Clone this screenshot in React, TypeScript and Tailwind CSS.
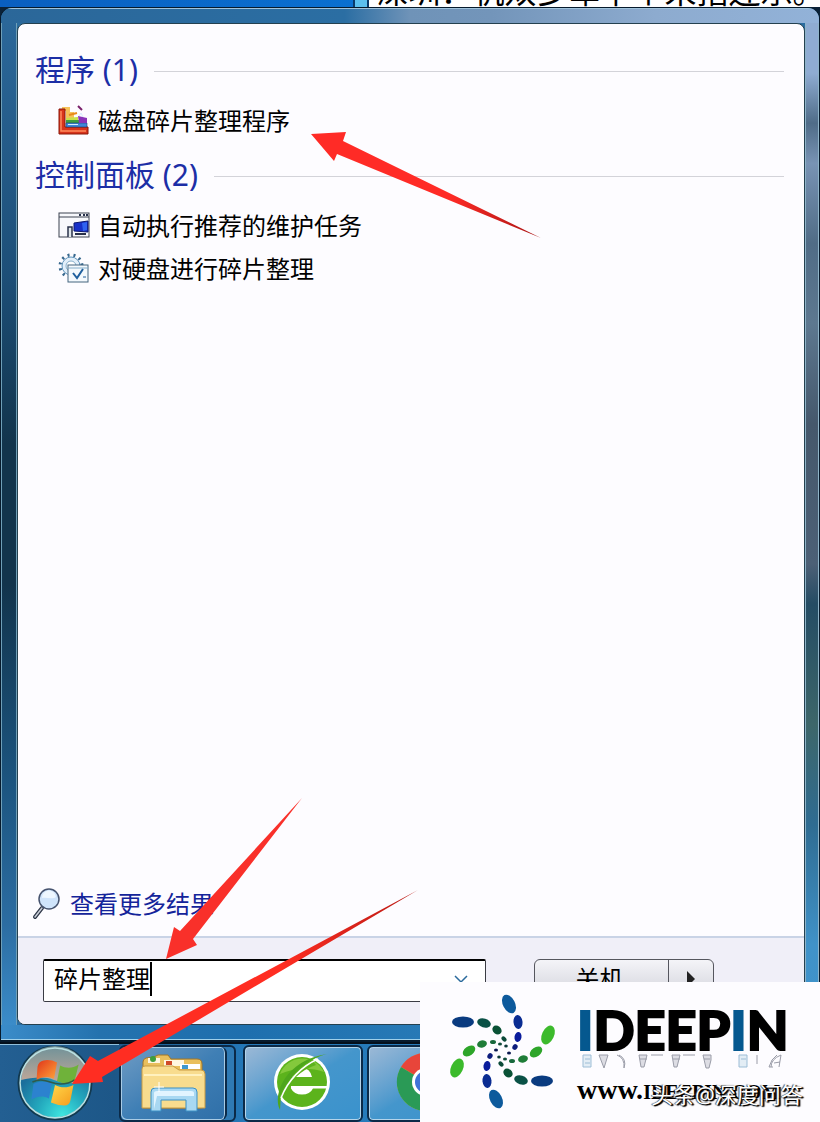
import React, { useState } from "react";

interface ResultItem {
  label: string;
  icon: React.ReactNode;
}

interface ResultGroupProps {
  title: string;
  items: ResultItem[];
}

const DefragIcon = () => (
  <svg viewBox="0 0 32 32" className="size-8 shrink-0" aria-hidden="true">
    <path d="M4 2h8v5h4v8H8V6H4z" fill="#f6c25a" />
    <path d="M20 1l4 4" stroke="#7a1f6a" strokeWidth="2" />
    <path d="M1 4h6v18h23v7H1z" fill="#d8341c" stroke="#8a1608" strokeWidth="1" />
    <path d="M3 6v20h25" stroke="#ff8a5c" strokeWidth="1.500" fill="none" />
    <path d="M8 13l12-1v3H8z" fill="#c8e04a" />
    <path d="M8 15h13v3H8z" fill="#3f9e42" />
    <path d="M8 18h21v4H8z" fill="#3f86d8" stroke="#1c3c78" strokeWidth=".6" />
    <path d="M20 11l9 2v5h-8z" fill="#8a34b8" />
    <path d="M21 11l2-3 2 4M10 19.500h10" stroke="#d6ecff" strokeWidth="1" fill="none" />
    <path d="M11 10l8-2" stroke="#e88a1c" strokeWidth="2" />
  </svg>
);

const MaintenanceIcon = () => (
  <svg viewBox="0 0 32 32" className="size-8 shrink-0" aria-hidden="true">
    <rect x="1" y="3" width="30" height="24" fill="#f7f8fc" stroke="#3c4250" />
    <path d="M1 7h30" stroke="#3c4250" />
    <path d="M21 5h2M25 5h2M28 5h2" stroke="#28304a" strokeWidth="2" />
    <path d="M16 13l14-2v11l-14-1z" fill="#1730c8" stroke="#0c1870" />
    <path d="M24 13l5-1v8l-4 1z" fill="#2f62f0" />
    <path d="M17 24h11" stroke="#28304a" strokeWidth="2" />
    <path d="M10 27V17h4v10" stroke="#28304a" strokeWidth="1.500" fill="#dfe6ea" />
  </svg>
);

const DefragTaskIcon = () => (
  <svg viewBox="0 0 32 32" className="size-8 shrink-0" aria-hidden="true">
    <circle cx="13" cy="13" r="11" fill="none" stroke="#38688e" strokeWidth="3" strokeDasharray="2 4" />
    <circle cx="13" cy="13" r="9" fill="#e2effa" stroke="#5f93bb" />
    <circle cx="13" cy="13" r="5" fill="#fff" stroke="#86aeca" />
    <rect x="10" y="12" width="20" height="17" fill="#f4f9fd" stroke="#44657f" />
    <path d="M10 15h20" stroke="#86aeca" />
    <path d="M15 20l4 5 6-9" fill="none" stroke="#1f5f9e" strokeWidth="2" />
    <path d="M25 24h3" stroke="#1f5f9e" />
  </svg>
);

const MagnifierIcon = () => (
  <svg viewBox="0 0 30 32" className="h-8 w-[30px] shrink-0" aria-hidden="true">
    <path d="M10 20L3 29" stroke="#2c3546" strokeWidth="4" strokeLinecap="round" />
    <path d="M10 20L3 29" stroke="#c8ccd6" strokeWidth="1.500" strokeLinecap="round" />
    <circle cx="17" cy="11" r="10" fill="#cfe4fb" stroke="#46536e" strokeWidth="1.500" />
    <path d="M10 10a7 7 0 0 1 14-1c-4 3-9 0-14 1z" fill="#eef7ff" />
  </svg>
);

const StartOrb = () => (
  <svg viewBox="0 0 74 74" className="size-[76px]" aria-hidden="true">
    <defs>
      <linearGradient id="orbTop" x1="0" y1="0" x2="0" y2="1">
        <stop offset="0" stopColor="#6f9299" />
        <stop offset="1" stopColor="#c3a898" />
      </linearGradient>
      <radialGradient id="orbBottom" cx=".6" cy=".95" r=".7">
        <stop offset="0" stopColor="#3fe6e0" />
        <stop offset=".5" stopColor="#23a8bd" />
        <stop offset="1" stopColor="#1b6f9c" />
      </radialGradient>
      <linearGradient id="flagRed" x1="0" y1="0" x2="1" y2="1">
        <stop offset="0" stopColor="#e0341a" />
        <stop offset="1" stopColor="#ffa83a" />
      </linearGradient>
      <linearGradient id="flagYellow" x1="0" y1="0" x2="1" y2="1">
        <stop offset="0" stopColor="#ffd84a" />
        <stop offset="1" stopColor="#f59a1c" />
      </linearGradient>
    </defs>
    <circle cx="37" cy="36" r="35" fill="url(#orbBottom)" stroke="#12394f" strokeWidth="3" />
    <path d="M4 33a33 33 0 0 1 66 0c-14 4-24 4-34 0S14 31 4 33z" fill="url(#orbTop)" />
    <circle cx="37" cy="36" r="34" fill="none" stroke="#b9e0e2" strokeWidth="1.500" />
    <path d="M20 20q1-5 6-6 7-1 13 2l-3 16c-6-3-12-2-17 1z" fill="url(#flagRed)" />
    <path d="M42 19c6 3 12 3 18-1l-4 16c-5 3-11 3-17 0z" fill="#6fb23a" />
    <path d="M16 37c6-3 12-3 18-1l-3 15c-6-3-11-2-17 1z" fill="#2c82cf" />
    <path d="M37 38c6 3 12 3 18 0l-3 15q-1 5-6 5-6 0-13-3z" fill="url(#flagYellow)" />
    <path d="M15 35c12-5 17 2 27 2 6 0 10-1 14-4" fill="none" stroke="#2f5a4a" strokeWidth="1.500" />
  </svg>
);

const FolderIcon = () => (
  <svg viewBox="0 0 66 60" className="h-[60px] w-[66px]" aria-hidden="true">
    <path d="M3 8q0-3 3-4l8-1 4-2h10l3 4h26q5 0 5 5v44H3z" fill="#e9bf5c" stroke="#a0762a" />
    <path d="M8 4h12v5H8z" fill="#fff6e0" />
    <circle cx="13" cy="5" r="3" fill="#3e9e3c" />
    <path d="M24 6h20v6H24z" fill="#fff6e0" />
    <path d="M26 7h6v4h-6z" fill="#d04a28" />
    <path d="M2 15q0-3 3-3h28l6 4h22q4 0 4 4v34H2z" fill="#f8dc8e" stroke="#c79a42" />
    <path d="M40 10h20v5H40z" fill="#fff" />
    <path d="M42 11h6v4h-6z" fill="#3f98d0" />
    <path d="M4 21h58" stroke="#fff1bf" strokeWidth="2" />
    <path d="M11 57V38q0-4 4-4h38q4 0 4 4v19H46V46H21v11z" fill="#a8d8f2" stroke="#3a8fc4" />
    <path d="M14 55V39q0-2 3-2h34q3 0 3 2v3H17z" fill="#e1f4ff" />
    <path d="M19 28v10M14 33h10" stroke="#fff" strokeWidth="1" />
  </svg>
);

const BrowserIcon = () => (
  <svg viewBox="0 0 60 60" className="size-[60px]" aria-hidden="true">
    <circle cx="30" cy="30" r="28" fill="#fff" />
    <circle cx="30" cy="30" r="25" fill="#5cb31c" />
    <path d="M8 22a24 24 0 0 1 44-2c-14-5-30-4-44 2z" fill="#84c93c" />
    <path d="M20 25q2-9 10-9t10 9zM19 34h38v2.500H41q-3 6-11 6t-11-6z" fill="#fff" />
    <path d="M8 58C0 42 14 8 55 2 36 6 16 26 9 42z" fill="#4ea61c" />
    <path d="M20 25q8-11 20-17l4 5q-12 4-20 12zM10 40q3-6 8-10v7q-4 3-7 8z" fill="#5cb31c" />
    <path d="M46 7C30 14 16 28 9 46" fill="none" stroke="#fff" strokeWidth="1.500" />
  </svg>
);

const ChromeIcon = () => (
  <svg viewBox="0 0 60 60" className="size-[60px]" aria-hidden="true">
    <circle cx="30" cy="30" r="29" fill="#f2c230" />
    <path d="M30 30L5 15a29 29 0 0 1 50 0z" fill="#e8453a" />
    <path d="M30 30L5 15a29 29 0 0 0 25 44z" fill="#2a9a56" />
    <circle cx="30" cy="30" r="14" fill="#fff" />
    <circle cx="30" cy="30" r="11" fill="#3f73d8" />
  </svg>
);

const PinwheelArms = () => (
  <>
    <ellipse cx="79" cy="24" rx="6" ry="10" transform="rotate(-27 79 24)" fill="#0d5a9c" />
    <ellipse cx="88" cy="42" rx="4.500" ry="7" transform="rotate(-6 88 42)" fill="#0a2c92" />
    <ellipse cx="88" cy="57" rx="3.500" ry="5" transform="rotate(8 88 57)" fill="#0a1c9c" />
    <ellipse cx="85" cy="67" rx="2.500" ry="3" transform="rotate(30 85 67)" fill="#0c1c7c" />
    <ellipse cx="79" cy="73" rx="2" ry="1.500" fill="#0b1a50" />
    <ellipse cx="33" cy="42" rx="11" ry="5.500" fill="#0a3b80" />
    <ellipse cx="54" cy="43" rx="7" ry="4.500" transform="rotate(17 54 43)" fill="#0a5146" />
    <ellipse cx="67" cy="50" rx="5" ry="4" transform="rotate(38 67 50)" fill="#0a5236" />
    <ellipse cx="74" cy="59" rx="3" ry="2" transform="rotate(45 74 59)" fill="#0b4a38" />
    <ellipse cx="76" cy="66" rx="1.800" ry="1.500" fill="#0b3a38" />
    <ellipse cx="118" cy="55" rx="6" ry="10" transform="rotate(25 118 55)" fill="#3cba2c" />
    <ellipse cx="106" cy="72" rx="7" ry="4.500" transform="rotate(-35 106 72)" fill="#2ea52a" />
    <ellipse cx="93" cy="79" rx="5" ry="3.500" transform="rotate(-15 93 79)" fill="#1f7d38" />
    <ellipse cx="82" cy="81" rx="3" ry="2" fill="#17683c" />
    <ellipse cx="75" cy="79" rx="2" ry="1.500" fill="#0e4a3a" />
  </>
);

const ResultGroup: React.FC<ResultGroupProps> = ({ title, items }) => {
  return (
    <section className="mb-[9px]">
      <h2 className="flex h-12 items-center gap-4 pr-5 pl-[17px] text-[30px] whitespace-nowrap text-[#1c2ea6]">
        <span className="pb-1">{title}</span>
        <span className="h-px flex-1 bg-[#d3d3d9]" />
      </h2>
      <ul className="pt-[5px] pl-10">
        {items.map((item) => (
          <li key={item.label}>
            <a href="#" className="flex h-[43px] items-center gap-2 pb-px text-2xl text-black">
              {item.icon}
              {item.label}
            </a>
          </li>
        ))}
      </ul>
    </section>
  );
};

const SearchMenu = () => {
  const [query, setQuery] = useState("碎片整理");

  return (
    <div className="flex flex-1 flex-col overflow-hidden rounded-t-xl border border-b-2 border-[#061a2c] bg-[#2a6c9f]">
      <div className="h-[15px] shrink-0 border-t border-[#9fc3dc] bg-[linear-gradient(90deg,#2b6799_0%,#2b6ea3_42%,#6f93b8_50%,#7395ba_60%,#8dabcf_80%,#92b2d8_100%)]" />
      <div className="flex flex-1">
        <div className="w-4 border-x border-[#6f9fb8] bg-[linear-gradient(180deg,#2b6799_0%,#1d4f78_25%,#12344c_42%,#12344c_56%,#1c5580_76%,#2c6da2_90%,#3b8cc9_100%)]" />
        <main className="flex flex-1 flex-col overflow-hidden rounded-lg border border-[#24404f] bg-[#fdfcff]">
          <div className="flex flex-1 flex-col pt-[23px]">
            <ResultGroup
              title="程序 (1)"
              items={[{ label: "磁盘碎片整理程序", icon: <DefragIcon /> }]}
            />
            <ResultGroup
              title="控制面板 (2)"
              items={[
                { label: "自动执行推荐的维护任务", icon: <MaintenanceIcon /> },
                { label: "对硬盘进行碎片整理", icon: <DefragTaskIcon /> },
              ]}
            />
            <a href="#" className="mt-auto mb-4 flex items-center gap-2 pl-[14px] text-2xl text-[#14249a]">
              <MagnifierIcon />
              查看更多结果
            </a>
          </div>
          <div className="flex h-[88px] items-start gap-12 border-t-2 border-[#c9d3e6] bg-[#f0eff8] pt-[21px] pr-[90px] pl-[25px]">
            <div className="flex h-[43px] flex-1 items-center rounded-xs border border-t-2 border-[#3a3c44] border-t-black bg-white pb-1 pl-[10px]">
              <input
                type="text"
                aria-label="搜索程序和文件"
                value={query}
                onChange={(e) => setQuery(e.target.value)}
                className="field-sizing-content h-[34px] border-r-2 border-black pb-1 text-2xl text-black outline-none"
              />
              <button type="button" aria-label="清除" className="mr-4 ml-auto" onClick={() => setQuery("")}>
                <svg viewBox="0 0 16 10" className="h-[10px] w-4">
                  <path d="M2 2l6 6 6-6" fill="none" stroke="#2a6a9c" strokeWidth="1.500" />
                </svg>
              </button>
            </div>
            <div className="flex h-[43px] w-[180px] overflow-hidden rounded-md border border-[#55565e] bg-linear-to-b from-[#f4f4f8] to-[#cfd0d8]">
              <button type="button" className="flex-1 border-r border-[#55565e] pr-1 pb-1 text-2xl leading-9 text-black">
                关机
              </button>
              <button type="button" aria-label="更多选项" className="flex w-11 items-center justify-center pb-1">
                <svg viewBox="0 0 10 16" className="h-4 w-[10px]">
                  <path d="M1 0l8 8-8 8z" fill="#222" />
                </svg>
              </button>
            </div>
          </div>
        </main>
        <div className="w-[14px] border-x border-[#8fb4c8] bg-[linear-gradient(180deg,#8facd2_0%,#8facd2_5%,#4f6c88_10%,#7893b4_14%,#506c86_22%,#5d7890_30%,#45586c_40%,#4c6076_54%,#244c64_58%,#3d666a_70%,#2f6c92_80%,#4092c8_92%,#3f93cc_100%)]" />
      </div>
      <div className="h-[15px] shrink-0 border-b border-[#9fd0ea] bg-[linear-gradient(90deg,#3b8cc9_0%,#2472ae_12%,#1e6fae_30%,#3a90c8_100%)]" />
    </div>
  );
};

const Taskbar = () => {
  return (
    <nav className="flex h-[80px] items-end border-t-2 border-[#04101c] bg-[linear-gradient(90deg,#235f92_0%,#1d5788_14%,#2478b8_30%,#2d86c4_100%)]">
      <button type="button" aria-label="开始" className="flex h-full w-[119px] items-center border-t border-[#8fc0dc] pl-[17px]">
        <StartOrb />
      </button>
      <div className="mr-[7px] flex h-[77px] rounded-md border-2 border-[#0b2a48] bg-[#2f7ab4] pr-[7px]">
        <button type="button" aria-label="资源管理器" className="flex w-[106px] items-center justify-center rounded-md border-r-2 border-[#0b2a48] bg-linear-to-br from-[#6f9cc4] via-[#3f7fb5] to-[#2f6fa8] shadow-[inset_0_0_0_1px_#a9cbe4]">
          <FolderIcon />
        </button>
      </div>
      <button type="button" aria-label="浏览器" className="mr-1 flex h-[77px] w-[120px] items-center justify-center rounded-md border-2 border-[#0b2a48] bg-linear-to-br from-[#9cb9d6] via-[#4496cc] to-[#3a92cc] pr-0.5 pb-1 shadow-[inset_0_0_0_1px_#b4d4ea]">
        <BrowserIcon />
      </button>
      <button type="button" aria-label="Chrome" className="flex h-[77px] w-[120px] items-center justify-center rounded-md border-2 border-[#0b2a48] bg-linear-to-br from-[#9cb9d6] via-[#4496cc] to-[#3a92cc] pr-0.5 pb-1 shadow-[inset_0_0_0_1px_#b4d4ea]">
        <ChromeIcon />
      </button>
    </nav>
  );
};

const Brand = () => {
  return (
    <aside className="absolute right-0 bottom-0 flex h-[140px] w-[400px] bg-[#fdfcff] pl-[10px]">
      <svg viewBox="0 2 142 140" className="h-[140px] w-[142px] shrink-0" aria-hidden="true">
        <PinwheelArms />
        <g transform="rotate(180 72.500 71.500)">
          <PinwheelArms />
        </g>
      </svg>
      <div className="flex flex-col pt-[18px] pl-[5px]">
        <p className="font-[Lato] text-[54px] leading-[60px] font-black text-black [-webkit-text-stroke:2px_currentColor]">
          <span className="text-[#05588f]">I</span>DEEP<span className="text-[#05588f]">I</span>N
        </p>
        <svg viewBox="0 0 210 16" className="-mt-1.5 h-4 w-[210px]" aria-hidden="true" fill="none" stroke="#9a9ca8">
          <path d="M6 1h8v12H6zM8 5h5M8 9h5M162 1h8v12h-8zM164 5h5" stroke="#9dbdd6" fill="#e3edf5" />
          <path d="M22 1h9l-4 13zM62 1h8l-3 12h-3zM95 1h8l-3 12h-3zM126 1h8v5l-2 8h-3z" fill="#dddde4" />
          <path d="M40 1q8 3 7 13M42 1q8 4 5 13M74 1h12M63 5h7M96 5h7M106 1h12M127 5h6M180 1v9M204 1l-2 12M194 13q0-8 10-12M192 13q2-8 8-12M197 9l6-1M192 13h4" />
        </svg>
        <div className="grid pt-1 whitespace-nowrap">
          <p className="col-start-1 row-start-1 font-['Liberation_Serif'] text-[20px] leading-8 font-bold text-black">
            <span className="text-[28px]">www.</span>IDEEPIN.COM
          </p>
          <p className="col-start-1 row-start-1 pt-1 pl-[74px] text-[22px] leading-8 text-white [text-shadow:1px_1px_1px_#000,2px_1px_1px_#000,-1px_0_1px_#444]">
            头条@深度问答
          </p>
        </div>
      </div>
    </aside>
  );
};

// Red callout arrows, laid over the menu and the taskbar
const Arrows = () => {
  return (
    <>
      <svg viewBox="0 0 232 108" className="pointer-events-none absolute top-[131px] left-[310px] h-[108px] w-[232px]" aria-hidden="true">
        <defs>
          <linearGradient id="arrowA" x1="0" y1="0" x2="1" y2="0">
            <stop offset=".6" stopColor="#ff2b26" />
            <stop offset="1" stopColor="#a81414" />
          </linearGradient>
        </defs>
        <path d="M1 3l35-2-3 9 198 97L27 23l-3 7z" fill="url(#arrowA)" />
      </svg>
      <svg viewBox="0 0 348 288" className="pointer-events-none absolute bottom-[36px] left-[71px] h-[288px] w-[348px]" aria-hidden="true">
        <defs>
          <linearGradient id="arrowB" x1="0" y1="0" x2="1" y2="0">
            <stop offset=".6" stopColor="#ff2d22" />
            <stop offset="1" stopColor="#b81a14" />
          </linearGradient>
        </defs>
        <path d="M95 161l8-32 6 4L231 0 122 141l4 6z" fill="#f9302a" />
        <path d="M1 286l18-28 8 5L347 92 31 279l1 5z" fill="url(#arrowB)" />
      </svg>
    </>
  );
};

const App: React.FC = () => {
  return (
    <div className="relative flex min-h-screen flex-col overflow-hidden bg-[#0b2238] font-['Noto_Sans','Noto_Sans_CJK_SC',sans-serif]">
      <header className="flex h-[7px] overflow-hidden bg-linear-to-r from-[#0a5fc0] to-[#0b86e6]">
        <div className="ml-[43%] w-4 shrink-0 border-x-2 border-[#0a3a6a] bg-[#5cc0ee]" />
        <div className="flex flex-1 items-end overflow-hidden bg-white pl-2">
          <p className="text-[32px] leading-8 whitespace-nowrap text-black">深圳：机双多军下个来指连乐。</p>
        </div>
      </header>
      <SearchMenu />
      <Taskbar />
      <Brand />
      <Arrows />
    </div>
  );
};

export default App;
